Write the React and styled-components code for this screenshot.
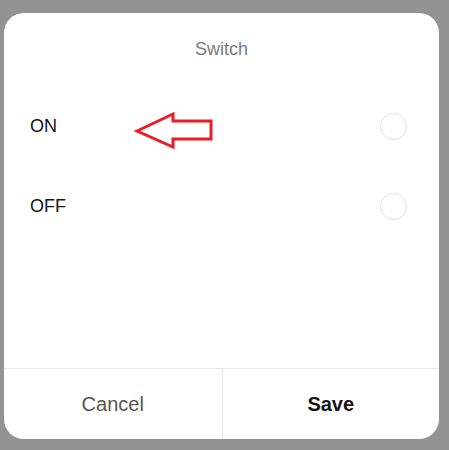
import React from "react";
import styled, { createGlobalStyle } from "styled-components";

const Global = createGlobalStyle`
  html, body { margin: 0; padding: 0; background: #939393; }
  body { font-family: "Liberation Sans", Arial, sans-serif; }
`;

const Page = styled.div`
  width: 449px;
  height: 450px;
  padding: 13px 10px 0 4px;
  box-sizing: border-box;
`;

const Card = styled.div`
  position: relative;
  width: 435px;
  height: 426px;
  background: #fff;
  border-radius: 20px;
  display: flex;
  flex-direction: column;
  overflow: hidden;
`;

const Title = styled.div`
  height: 73px;
  display: flex;
  align-items: center;
  justify-content: center;
  font-size: 18px;
  color: #7a7a7a;
`;

const Row = styled.div`
  height: 80px;
  display: flex;
  align-items: center;
  justify-content: space-between;
  padding: 0 32px 0 26px;
`;

const Label = styled.span`
  font-size: 18px;
  color: #141414;
`;

const Radio = styled.span`
  width: 25px;
  height: 25px;
  border: 1px solid #e2e2e2;
  border-radius: 50%;
`;

const Spacer = styled.div`
  flex: 1;
`;

const Footer = styled.div`
  height: 70px;
  border-top: 1px solid #e8e8e8;
  display: grid;
  grid-template-columns: 1fr 1fr;
`;

const FooterButton = styled.div`
  display: flex;
  align-items: center;
  justify-content: center;
  font-size: 20px;
  color: ${(p) => (p.$primary ? "#141414" : "#555")};
  font-weight: ${(p) => (p.$primary ? 700 : 400)};
  & + & { border-left: 1px solid #e8e8e8; }
`;

const Arrow = styled.svg`
  position: absolute;
  left: 126px;
  top: 85px;
`;

export default function App() {
  return (
    <>
      <Global />
      <Page>
        <Card>
          <Title>Switch</Title>
          <Row>
            <Label>ON</Label>
            <Radio />
          </Row>
          <Row>
            <Label>OFF</Label>
            <Radio />
          </Row>
          <Spacer />
          <Footer>
            <FooterButton>Cancel</FooterButton>
            <FooterButton $primary>Save</FooterButton>
          </Footer>
          <Arrow width="90" height="56" viewBox="0 0 90 56">
            <polygon
              points="7,33 43,16 43,23 81,23 81,41 43,41 43,49"
              fill="none"
              stroke="#ed1c24"
              strokeWidth="3"
              strokeLinejoin="miter"
            />
          </Arrow>
        </Card>
      </Page>
    </>
  );
}
